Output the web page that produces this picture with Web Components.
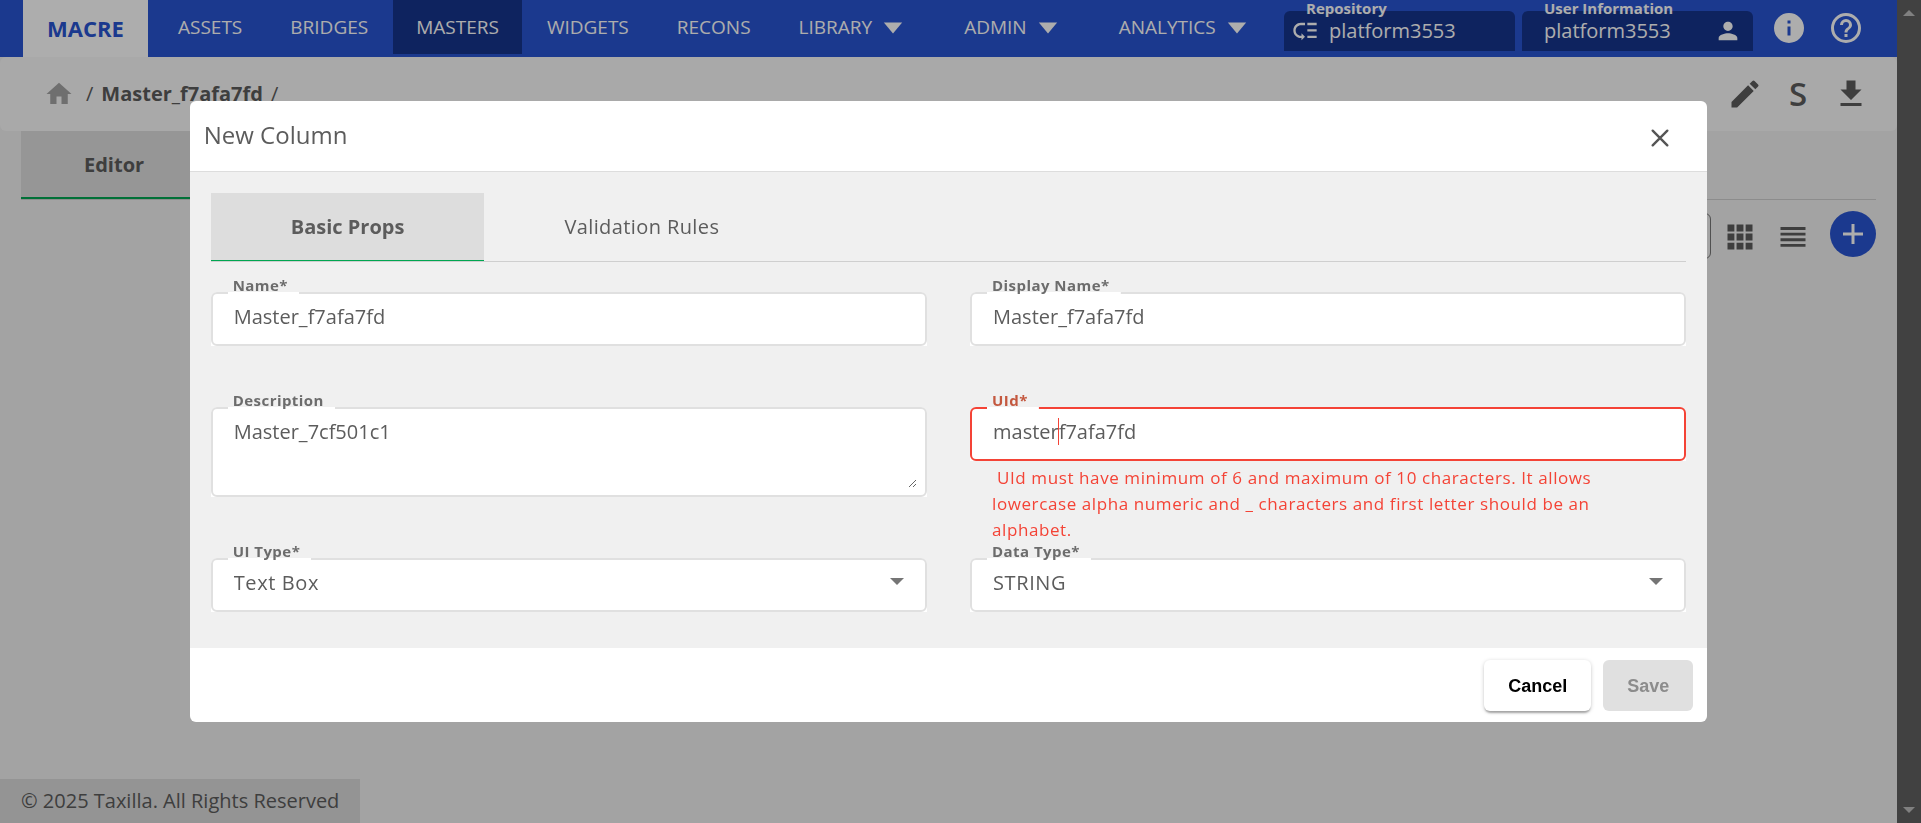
<!DOCTYPE html>
<html lang="en">
<head>
<meta charset="utf-8">
<title>New Column</title>
<style>
  html, body { margin: 0; height: 100%; overflow: hidden; }
  body { font: 400 20px/28px "Open Sans", "Noto Sans", sans-serif; color: #5c5c5c; background: #f0f0f0; }
</style>
</head>
<body>
<app-shell></app-shell>
<script>
const define = (name, html, setup) => customElements.define(name, class extends HTMLElement {
  constructor() {
    super();
    this.attachShadow({ mode: "open" }).innerHTML =
      "<style>*{box-sizing:border-box} button,input,textarea,select{font:inherit;color:inherit;margin:0} a{color:inherit;text-decoration:none} svg{display:block}</style>" + html;
    if (setup) setup(this, this.shadowRoot);
  }
});

const ICONS = {
  home: '<path d="M10 20v-6h4v6h5v-8h3L12 3 2 12h3v8z"/>',
  caret: '<path d="M2 7h20L12 19z"/>',
  down: '<path d="M5 9l7 7 7-7z"/>',
  edit: '<path d="M3 17.25V21h3.75L17.81 9.94l-3.75-3.75L3 17.25zM20.71 7.04a1 1 0 0 0 0-1.41l-2.34-2.34a1 1 0 0 0-1.41 0l-1.83 1.83 3.75 3.75 1.83-1.83z"/>',
  download: '<path d="M19 9h-4V3H9v6H5l7 7 7-7zM5 18v2h14v-2H5z"/>',
  person: '<path d="M12 12c2.21 0 4-1.79 4-4s-1.79-4-4-4-4 1.79-4 4 1.79 4 4 4zm0 2c-2.67 0-8 1.34-8 4v2h16v-2c0-2.66-5.33-4-8-4z"/>',
  info: '<path d="M12 2a10 10 0 1 0 0 20 10 10 0 0 0 0-20zm1 15h-2v-6h2v6zm0-8h-2V7h2v2z"/>',
  help: '<path d="M11 18h2v-2h-2v2zm1-16a10 10 0 1 0 0 20 10 10 0 0 0 0-20zm0 18a8 8 0 1 1 0-16 8 8 0 0 1 0 16zm0-14a4 4 0 0 0-4 4h2a2 2 0 1 1 4 0c0 2-3 1.750-3 5h2c0-2.250 3-2.500 3-5a4 4 0 0 0-4-4z"/>',
  lowPriority: '<path d="M14 5h8v2h-8zm0 5.500h8v2h-8zm0 5.500h8v2h-8zM2 11.500C2 15.080 4.920 18 8.500 18H9v2l3-3-3-3v2h-.5C6.020 16 4 13.980 4 11.500S6.020 7 8.500 7H12V5H8.500C4.920 5 2 7.920 2 11.500z"/>',
  grid: '<path d="M2 2h5.500v5.500H2zm7.250 0h5.500v5.500h-5.500zM16.500 2H22v5.500h-5.500zM2 9.250h5.500v5.500H2zm7.250 0h5.500v5.500h-5.500zm7.250 0H22v5.500h-5.500zM2 16.500h5.500V22H2zm7.250 0h5.500V22h-5.500zm7.250 0H22V22h-5.500z"/>',
  list: '<path d="M2 4h20v2.300H2zm0 4.500h20v2.300H2zm0 4.500h20v2.300H2zm0 4.500h20v2.300H2z"/>',
  plus: '<path d="M10.500 2h3v8.500H22v3h-8.500V22h-3v-8.500H2v-3h8.500z"/>',
  close: '<path d="M4 4l16 16M20 4L4 20" fill="none" stroke="currentColor" stroke-width="2.600" stroke-linecap="round"/>'
};
define("ui-icon", `<style>:host{display:inline-block;flex:none;width:24px;height:24px} svg{width:100%;height:100%}</style>`,
  (el, root) => root.innerHTML += `<svg viewBox="0 0 24 24" fill="currentColor" aria-hidden="true">${ICONS[el.getAttribute("name")]}</svg>`);

define("nav-item", `<style>
  :host{display:block}
  a{display:flex;align-items:center;height:54px;padding:0 23px;font-size:19px;font-weight:500;white-space:nowrap}
  :host([current]) a{background:#15348d}
  ui-icon{display:none;width:22px;height:22px;margin:0 12px 0 10px}
  :host([menu]) ui-icon{display:block}
</style><a href="#"><slot></slot><ui-icon name="caret"></ui-icon></a>`);

define("info-chip", `<style>
  :host{display:block;position:relative;flex:none;width:231px;height:40px;background:#15348d;border-radius:6px 6px 0 0}
  .cap{position:absolute;left:22px;top:-13px;font-size:15px;font-weight:700;line-height:20px;white-space:nowrap}
  .row{display:flex;align-items:center;height:40px;padding:0 11px 0 7px}
  .row span{flex:1}
  :host([user]) .row{padding-left:22px}
  ::slotted(ui-icon){width:28px;height:28px}
  slot[name=before]::slotted(ui-icon){margin-right:10px}
</style><span class="cap"></span><div class="row"><slot name="before"></slot><span><slot></slot></span><slot name="after"></slot></div>`,
  (el, root) => root.querySelector(".cap").textContent = el.getAttribute("caption"));

define("top-bar", `<style>
  :host{display:flex;height:57px;background:#2954d1;color:#fff;padding-left:23px}
  .brand{flex:none;width:125px;height:57px;padding-bottom:2px;display:grid;place-items:center;background:#fff;color:#2954d1;font-size:22px;font-weight:700}
  nav{display:flex;gap:2px;margin-left:7px}
  .right{flex:1;display:flex;justify-content:flex-end;gap:7px;padding:11px 33px 0 0}
  .icons{display:flex;gap:21px;margin:-1px 0 0 11px}
  button{border:0;background:none;padding:0;width:36px;height:36px}
  button ui-icon{width:36px;height:36px}
</style>
<a class="brand" href="#">MACRE</a>
<nav>
  <nav-item>ASSETS</nav-item><nav-item>BRIDGES</nav-item><nav-item current>MASTERS</nav-item><nav-item>WIDGETS</nav-item><nav-item>RECONS</nav-item>
  <nav-item menu>LIBRARY</nav-item><nav-item menu>ADMIN</nav-item><nav-item menu>ANALYTICS</nav-item>
</nav>
<div class="right">
  <info-chip caption="Repository"><ui-icon slot="before" name="lowPriority"></ui-icon>platform3553</info-chip>
  <info-chip caption="User Information" user>platform3553<ui-icon slot="after" name="person"></ui-icon></info-chip>
  <div class="icons"><button aria-label="Info"><ui-icon name="info"></ui-icon></button><button aria-label="Help"><ui-icon name="help"></ui-icon></button></div>
</div>`);

define("crumb-bar", `<style>
  :host{display:flex;align-items:center;height:74px;padding:0 28px 0 44px;background:#f9f9f9;border-radius:6px}
  .home{width:30px;height:30px;color:#a4a4a4;margin-right:4px} .home ui-icon{width:30px;height:30px}
  nav{display:flex;align-items:center;gap:8px;flex:1}
  b{font-weight:700}
  .tools{display:flex;gap:17px;color:#5c5c5c}
  button{border:0;background:none;padding:0;width:36px;height:36px;font-size:33px;font-weight:600;line-height:34px}
  button ui-icon{width:36px;height:36px}
</style>
<nav><a class="home" href="#" aria-label="Home"><ui-icon name="home"></ui-icon></a><span>/</span><b>Master_f7afa7fd</b><span>/</span></nav>
<div class="tools"><button aria-label="Edit"><ui-icon name="edit"></ui-icon></button><button>S</button><button aria-label="Download"><ui-icon name="download"></ui-icon></button></div>`);

define("tab-strip", `<style>
  :host{display:flex;border-bottom:1px solid #cfcfcf}
</style><slot></slot>`);
define("tab-item", `<style>
  :host{display:block;height:68px}
  button{height:100%;border:0;border-bottom:var(--tab-line,1px) solid transparent;background:none;padding:1px var(--tab-pad,80px) 0;font-weight:500;letter-spacing:0.02em}
  :host([selected]) button{background:#ddd;border-color:#00a651;font-weight:700;letter-spacing:normal}
</style><button><slot></slot></button>`);

define("list-tools", `<style>
  :host{display:flex;align-items:center;justify-content:flex-end;padding:9px 21px 0 0}
  input{width:300px;height:46px;border:1px solid #777;border-radius:6px;background:none;margin:4px 13px 0 0}
  button{display:grid;place-items:center;border:0;background:none;padding:0;width:32px;height:32px;margin:5px 21px 0 0}
  button ui-icon{width:30px;height:30px}
  .add{width:46px;height:46px;border-radius:50%;background:#2954d1;color:#fff;margin:0}
  .add ui-icon{width:24px;height:24px}
</style><input aria-label="Search"><button aria-label="Grid view"><ui-icon name="grid"></ui-icon></button><button aria-label="List view"><ui-icon name="list"></ui-icon></button><button class="add" aria-label="Add"><ui-icon name="plus"></ui-icon></button>`);

define("side-scroll", `<style>
  :host{display:flex;flex-direction:column;justify-content:space-between;align-items:center;width:24px;background:#616161;padding:10px 0}
  i{border:6px solid transparent;border-top-width:0;border-bottom:6px solid #bdbdbd}
  i+i{transform:rotate(180deg)}
</style><i></i><i></i>`);

define("form-field", `<style>
  :host{display:block}
  .box{position:relative;background:#fff;border-radius:6px 6px 0 0}
  .frame{display:flex;min-height:54px;border:2px solid #e0e0e0;border-radius:6px}
  label{position:absolute;left:17px;top:-16px;height:18px;padding:0 11px 0 5px;font-size:15px;line-height:18px;font-weight:700;letter-spacing:0.03em;color:#6c6c6c;white-space:nowrap;background:linear-gradient(#fff,#fff) bottom/100% 2px no-repeat}
  input,textarea,select{flex:1;min-width:0;border:0;outline:0;background:none;padding:9px 21px 13px;line-height:28px}
  textarea{margin:0 8px 7px 0;padding-right:13px;height:79px;resize:vertical;display:block}
  select{appearance:none;letter-spacing:0.03em}
  ui-icon{position:absolute;right:18px;top:11px;pointer-events:none;color:#757575}
  .error{display:none;padding:4px 22px 0;font-size:17px;line-height:26px;letter-spacing:0.035em;color:#f44336}
  :host([invalid]) .frame{border-color:#f44336}
  :host([invalid]) label{color:#c4583f}
  :host([invalid]) .error{display:block}
  .caret{position:absolute;left:88px;top:11px;width:1px;height:27px;background:#f44336}
</style><div class="box"><label for="c"></label><div class="frame"></div></div><div class="error"><slot></slot></div>`,
  (el, root) => {
    const kind = el.getAttribute("kind") || "text", value = el.getAttribute("value");
    root.querySelector("label").textContent = el.getAttribute("label");
    root.querySelector(".frame").innerHTML =
      kind === "area" ? `<textarea id="c">${value}</textarea>` :
      kind === "select" ? `<select id="c"><option>${value}</option></select><ui-icon name="down"></ui-icon>` :
      `<input id="c" type="text" value="${value}">` + (el.hasAttribute("invalid") ? '<span class="caret"></span>' : "");
  });

define("column-dialog", `<style>
  :host{display:flex;flex-direction:column;width:80%;background:#fff;border-radius:6px;overflow:hidden}
  header{display:flex;align-items:flex-start;justify-content:space-between;height:71px;padding:18px 36px 0 14px;border-bottom:1px solid #ddd}
  h2{margin:0;font-size:24px;line-height:32px;font-weight:400}
  header button{border:0;background:none;padding:0;width:22px;height:22px;margin-top:8px;color:#555}
  header ui-icon{width:22px;height:22px}
  .body{background:#f0f0f0;padding:21px 21px 36px}
  .grid{display:grid;grid-template-columns:1fr 1fr;column-gap:43px;margin-top:30px}
  .grid>*:nth-child(-n+2){min-height:115px}
  .grid>*:nth-child(3){min-height:151px}
  footer{display:flex;justify-content:flex-end;gap:12px;padding:12px 14px 11px}
  footer button{height:51px;border:0;border-radius:6px;padding:0 24px;background:#fff;color:#000;font:700 18px/24px "Liberation Sans",Arial,sans-serif;box-shadow:0 3px 2px -1px #0004,0 1px 4px #0003}
  footer button:disabled{background:#e0e0e0;color:#8c8c8c;box-shadow:none}
</style>
<header><h2>New Column</h2><button aria-label="Close"><ui-icon name="close"></ui-icon></button></header>
<div class="body">
  <tab-strip><tab-item selected>Basic Props</tab-item><tab-item>Validation Rules</tab-item></tab-strip>
  <div class="grid">
    <form-field label="Name*" value="Master_f7afa7fd"></form-field>
    <form-field label="Display Name*" value="Master_f7afa7fd"></form-field>
    <form-field label="Description" kind="area" value="Master_7cf501c1"></form-field>
    <form-field label="UId*" invalid value="masterf7afa7fd">&nbsp;UId must have minimum of 6 and maximum of 10 characters. It allows lowercase alpha numeric and _ characters and first letter should be an alphabet.</form-field>
    <form-field label="UI Type*" kind="select" value="Text Box"></form-field>
    <form-field label="Data Type*" kind="select" value="STRING"></form-field>
  </div>
</div>
<footer><button>Cancel</button><button disabled>Save</button></footer>`);

define("app-shell", `<style>
  :host{display:flex;height:100vh}
  main{flex:1;min-width:0;display:flex;flex-direction:column}
  .tabs{margin:0 21px;--tab-pad:63px;--tab-line:2px}
  footer{margin-top:auto;align-self:flex-start;padding:8px 21px;background:#dadada}
  .overlay{position:fixed;inset:0;padding-right:24px;background:rgba(0,0,0,.32);display:grid;place-items:center}
</style>
<main>
  <top-bar></top-bar>
  <crumb-bar></crumb-bar>
  <tab-strip class="tabs"><tab-item selected>Editor</tab-item></tab-strip>
  <list-tools></list-tools>
  <footer>© 2025 Taxilla. All Rights Reserved</footer>
</main>
<side-scroll></side-scroll>
<div class="overlay"><column-dialog role="dialog" aria-label="New Column"></column-dialog></div>`);
</script>
</body>
</html>
